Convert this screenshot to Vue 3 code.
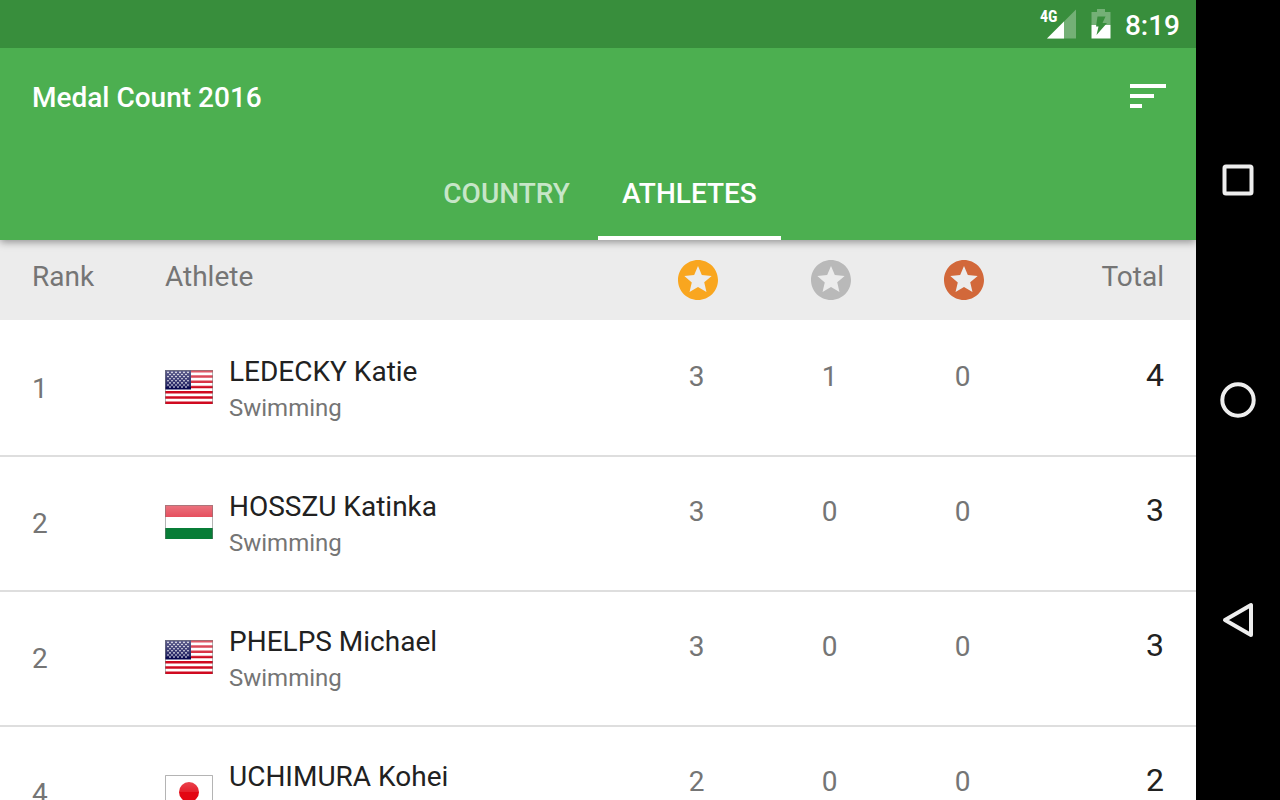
<script setup>
import { ref } from 'vue'

const tabs = ['Country', 'Athletes']
const active = ref('Athletes')
const medals = [
  { name: 'Gold', color: '#f9a61f' },
  { name: 'Silver', color: '#b9b9b9' },
  { name: 'Bronze', color: '#d2683a' },
]
const athletes = [
  { rank: 1, flag: 'usa', name: 'LEDECKY Katie', sport: 'Swimming', counts: [3, 1, 0], total: 4 },
  { rank: 2, flag: 'hun', name: 'HOSSZU Katinka', sport: 'Swimming', counts: [3, 0, 0], total: 3 },
  { rank: 2, flag: 'usa', name: 'PHELPS Michael', sport: 'Swimming', counts: [3, 0, 0], total: 3 },
  { rank: 4, flag: 'jpn', name: 'UCHIMURA Kohei', sport: '', counts: [2, 0, 0], total: 2 },
]
const stars = []
for (let row = 0; row < 8; row++) {
  for (let col = 0; col < 6; col++) {
    const x = 3 + col * 4 + (row % 2) * 2
    if (x < 25) stars.push({ x, y: 2.4 + row * 2.1 })
  }
}
</script>

<template>
  <div class="device">
    <div class="screen">
      <header class="top">
        <div class="status">
          <div class="signal">
            <span class="net">4G</span>
            <svg width="30" height="30" viewBox="0 0 30 30" aria-hidden="true">
              <path d="M0 29.500 29 .5V29.500Z" fill="#fff" fill-opacity=".3" />
              <path d="M0 29.500 17 12.500V29.500Z" fill="#fff" />
            </svg>
          </div>
          <svg class="battery" width="20" height="30" viewBox="0 0 20 30" aria-hidden="true">
            <path d="M6 0h8v3h5.500v13H.5V3H6Z" fill="#fff" fill-opacity=".3" />
            <path d="M.5 16h19v13.500H.5Z" fill="#fff" />
            <path d="M6.500 7.500h8l-3 6.500h4.500L5.500 26l2-8.500H5Z" fill="#388e3c" />
          </svg>
          <time>8:19</time>
        </div>
        <div class="toolbar">
          <h1>Medal Count 2016</h1>
          <button class="sort" aria-label="Sort">
            <svg width="36" height="24" viewBox="0 0 36 24" fill="#fff">
              <path d="M0 0h36v4H0ZM0 10h24v4H0ZM0 20h12v4H0Z" />
            </svg>
          </button>
        </div>
        <nav class="tabs">
          <button v-for="t in tabs" :key="t" :class="{ active: active === t }" @click="active = t">{{ t }}</button>
        </nav>
      </header>

      <main>
        <table>
          <colgroup>
            <col class="c-rank"><col><col class="c-medal"><col class="c-medal"><col class="c-medal"><col class="c-total">
          </colgroup>
          <thead>
            <tr>
              <th class="rank">Rank</th>
              <th>Athlete</th>
              <th v-for="m in medals" :key="m.name" class="medal">
                <svg width="40" height="40" viewBox="2 2 20 20" role="img" :aria-label="m.name">
                  <path :fill="m.color" d="M11.990 2C6.470 2 2 6.480 2 12s4.470 10 9.990 10C17.520 22 22 17.520 22 12S17.520 2 11.990 2zm4.240 16L12 15.450 7.770 18l1.120-4.810-3.730-3.230 4.920-.42L12 5l1.920 4.530 4.920.42-3.730 3.230L16.230 18z" />
                </svg>
              </th>
              <th class="total">Total</th>
            </tr>
          </thead>
          <tbody>
            <tr v-for="a in athletes" :key="a.name">
              <td class="rank">{{ a.rank }}</td>
              <td class="who">
                <div class="athlete">
                  <svg class="flag" width="48" height="34" viewBox="0 0 48 34" aria-hidden="true">
                    <g v-if="a.flag === 'usa'">
                      <path d="M0 0h48v34H0Z" fill="#fff" />
                      <path v-for="n in 7" :key="n" :d="`M0 ${(n - 1) * 5.250}h48v2.600H0Z`" fill="#d00a20" />
                      <path d="M0 0h26v19.500H0Z" fill="#080850" />
                      <circle v-for="(s, i) in stars" :key="i" :cx="s.x" :cy="s.y" r=".8" fill="#fff" />
                    </g>
                    <g v-else-if="a.flag === 'hun'">
                      <path d="M0 0h48v12H0Z" fill="#e02a3c" />
                      <path d="M0 12h48v11H0Z" fill="#fff" />
                      <path d="M0 23h48v11H0Z" fill="#087d37" />
                    </g>
                    <g v-else>
                      <path d="M0 0h48v34H0Z" fill="#fff" />
                      <circle cx="24" cy="17" r="10" fill="#e30613" />
                    </g>
                    <path d="M0 0h48v17H0Z" fill="url(#gloss)" />
                    <path d="M.5 34V.5h47V34" fill="none" stroke="#777" stroke-opacity=".55" />
                  </svg>
                  <div>
                    <div class="name">{{ a.name }}</div>
                    <div class="sport">{{ a.sport }}</div>
                  </div>
                </div>
              </td>
              <td v-for="(c, i) in a.counts" :key="i" class="medal">{{ c }}</td>
              <td class="total">{{ a.total }}</td>
            </tr>
          </tbody>
        </table>
        <svg class="defs" width="0" height="0" aria-hidden="true">
          <linearGradient id="gloss" x1="0" y1="0" x2="0" y2="1">
            <stop offset="0" stop-color="#fff" stop-opacity=".35" />
            <stop offset="1" stop-color="#fff" stop-opacity=".1" />
          </linearGradient>
        </svg>
      </main>
    </div>

    <nav class="system" aria-label="System">
      <button aria-label="Recent apps">
        <svg width="36" height="36" viewBox="0 0 36 36"><rect x="4.500" y="4.500" width="27" height="27" rx="1.500" /></svg>
      </button>
      <button aria-label="Home">
        <svg width="36" height="36" viewBox="0 0 36 36"><circle cx="18" cy="18" r="15.700" /></svg>
      </button>
      <button aria-label="Back">
        <svg width="36" height="36" viewBox="0 0 36 36"><path d="M5 18 31 3V33Z" /></svg>
      </button>
    </nav>
  </div>
</template>

<style>
body { margin: 0; overflow: hidden; }
</style>

<style scoped>
.device {
  display: flex;
  height: 100vh;
  overflow: hidden;
  font-family: Roboto, "Noto Sans", sans-serif;
  background: #fff;
  color: #757575;
}
button {
  border: 0;
  padding: 0;
  background: none;
  font: inherit;
  color: inherit;
  cursor: pointer;
}
svg { display: block; }
.screen { flex: 1; min-width: 0; overflow: hidden; }
.top {
  position: relative;
  background: #4caf50;
  color: #fff;
  box-shadow: 0 2px 8px rgba(0, 0, 0, .4);
}
.status {
  height: 48px;
  padding-right: 16px;
  background: #388e3c;
  display: flex;
  align-items: center;
  justify-content: flex-end;
  gap: 14px;
}
.signal { position: relative; }
.net {
  position: absolute;
  left: -7px;
  top: 0;
  font-size: 16px;
  line-height: 16px;
  font-weight: 700;
  font-family: "Roboto Condensed", Roboto, sans-serif;
}
time { font-size: 28px; line-height: 32px; font-weight: 500; padding-top: 4px; }
.toolbar {
  height: 96px;
  padding: 0 30px 0 32px;
  display: flex;
  align-items: center;
  justify-content: space-between;
}
h1 { margin: 0; font-size: 28px; line-height: 32px; font-weight: 500; padding-top: 4px; }
.tabs {
  height: 96px;
  display: grid;
  grid-template-columns: 1fr 1fr;
  width: max-content;
  margin: 0 auto;
}
.tabs button {
  padding: 8px 24px 0;
  font-size: 28px;
  line-height: 32px;
  font-weight: 500;
  text-transform: uppercase;
  color: rgba(255, 255, 255, .7);
  border-bottom: 4px solid transparent;
}
.tabs .active { color: #fff; border-color: #fff; }

table {
  width: 100%;
  table-layout: fixed;
  border-collapse: separate;
  border-spacing: 0;
  font-size: 28px;
  line-height: 32px;
}
.c-rank { width: 165px; }
.c-medal { width: 133px; }
.c-total { width: 166px; }
th, td { padding: 0; text-align: left; vertical-align: top; font-weight: 400; }
th {
  height: 60px;
  padding-top: 20px;
  background: #ececec;
  border-bottom: 2px solid #fff;
  line-height: 34px;
}
td { height: 133px; border-bottom: 2px solid #dedede; }
.rank { padding-left: 32px; }
td.rank { vertical-align: middle; }
th.medal svg { margin: 0 auto; }
td.medal { text-align: center; padding: 39px 2px 0 0; height: 94px; }
.total { text-align: right; padding-right: 32px; }
td.total { padding-top: 37px; height: 96px; font-size: 32px; color: #212121; }
td.who { padding-top: 32px; height: 101px; }
.athlete { display: flex; align-items: flex-start; gap: 16px; }
.flag { flex: none; margin-top: 16px; }
.name { color: #212121; line-height: 36px; }
.sport { font-size: 24px; line-height: 36px; }

.system {
  flex: none;
  width: 84px;
  padding: 70px 0;
  box-sizing: border-box;
  background: #000;
  display: flex;
  flex-direction: column;
}
.system button { flex: 1; display: flex; align-items: center; justify-content: center; }
.system svg { fill: none; stroke: #eee; stroke-width: 4; stroke-linejoin: round; }
</style>
